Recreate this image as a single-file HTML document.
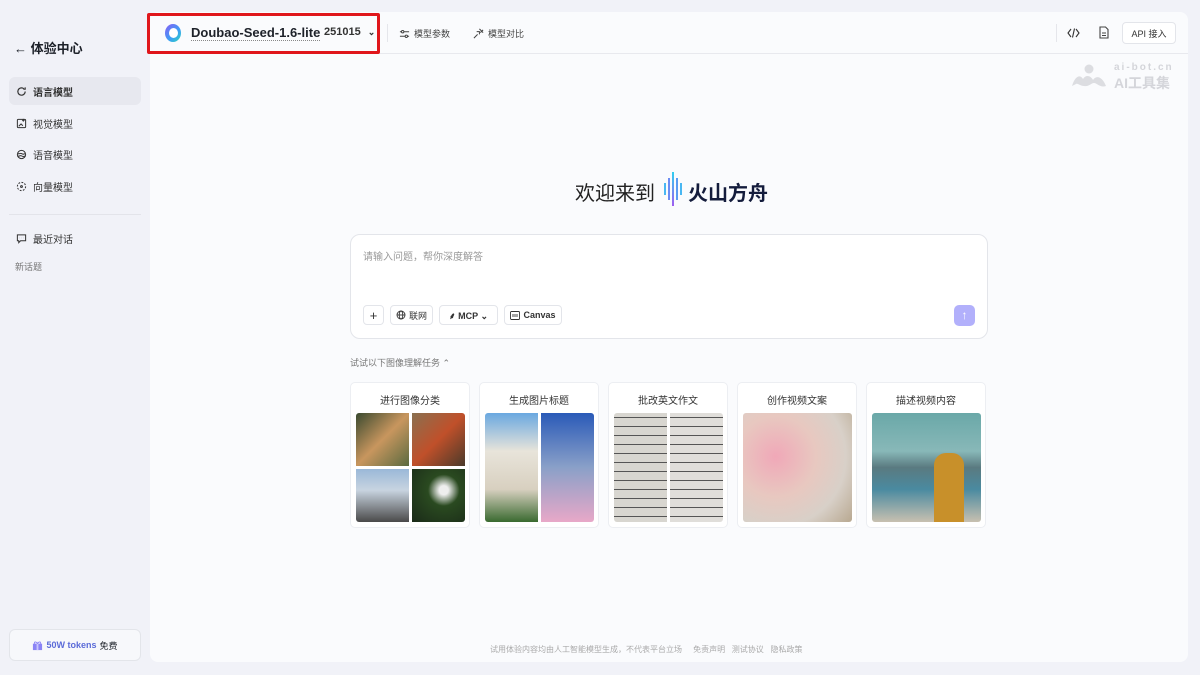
<!DOCTYPE html>
<html><head><meta charset="utf-8"><style>
*{box-sizing:border-box;margin:0;padding:0}
body{width:1200px;height:675px;background:#f1f2f8;font-family:"Liberation Sans","Noto Sans CJK SC",sans-serif;position:relative;overflow:hidden;color:#1d2129}
.a{position:absolute}
.nav{position:absolute;left:9px;width:132px;height:28px;display:flex;align-items:center;padding-left:7px;gap:6px;font-size:10px;border-radius:6px;color:#333}
.nav svg{width:11px;height:11px}
.main{left:150px;top:12px;width:1038px;height:650px;background:#fafbfd;border-radius:8px}
.btn{position:absolute;height:20px;border:1px solid #e3e5ea;border-radius:4px;background:#fff;font-size:9px;display:flex;align-items:center;justify-content:center;gap:3px;color:#333}
.card{position:absolute;top:382px;width:120px;height:146px;background:#fff;border:1px solid #eceef2;border-radius:5px}
.card .t{text-align:center;font-size:10px;color:#333;margin-top:9px}
.img{position:absolute;top:30px;left:5px;width:109px;height:109px;border-radius:3px;overflow:hidden}
</style></head><body>
<div class="a" style="left:14px;top:38px;font-size:13px;font-weight:bold">← 体验中心</div>
<div class="nav" style="top:77px;background:#e7e8ef;font-weight:bold"><svg viewBox="0 0 12 12" fill="none" stroke="#333" stroke-width="1.3"><path d="M10 6a4 4 0 1 1-1.5-3.1M10 1.5v2h-2"/></svg>语言模型</div>
<div class="nav" style="top:109px"><svg viewBox="0 0 12 12" fill="none" stroke="#333" stroke-width="1.1"><rect x="1.5" y="1.5" width="9" height="9" rx="1"/><path d="M3 9l2.5-2.5 2 2M8 1v3M6.5 2.5h3"/></svg>视觉模型</div>
<div class="nav" style="top:140px"><svg viewBox="0 0 12 12" fill="none" stroke="#333" stroke-width="1.1"><circle cx="6" cy="6" r="4.5"/><path d="M2 5c1.5 1 2.5-1 4 0s2.5 1 4 0M2 7.5c1.5 1 2.5-1 4 0s2.5 1 4 0"/></svg>语音模型</div>
<div class="nav" style="top:172px"><svg viewBox="0 0 12 12" fill="none" stroke="#333" stroke-width="1.1"><circle cx="6" cy="6" r="4.5" stroke-dasharray="2 1.5"/><circle cx="6" cy="6" r="1"/></svg>向量模型</div>
<div class="a" style="left:9px;top:214px;width:132px;height:1px;background:#e3e4ea"></div>
<div class="nav" style="top:224px"><svg viewBox="0 0 12 12" fill="none" stroke="#333" stroke-width="1.1"><path d="M1.5 2h9v6.5H5L3 10.5V8.5H1.5z"/><path d="M4 5.3h.1M6 5.3h.1M8 5.3h.1" stroke-width="1.4"/></svg>最近对话</div>
<div class="a" style="left:15px;top:260px;font-size:9px;color:#777">新话题</div>
<div class="a" style="left:9px;top:629px;width:132px;height:32px;background:#f7f8fb;border:1px solid #e3e5ea;border-radius:6px;font-size:9px;display:flex;align-items:center;justify-content:center;gap:3px"><svg width="11" height="11" viewBox="0 0 12 12"><rect x="1" y="4" width="10" height="7" fill="#8b84f6"/><rect x="5" y="2" width="2" height="9" fill="#c9c6fb"/><path d="M6 4C4 1 2 2 3 4M6 4c2-3 4-2 3 0" stroke="#8b84f6" fill="none"/></svg><b style="color:#5b6bd8">50W tokens</b>免费</div>

<div class="a main"></div>
<div class="a" style="left:150px;top:53px;width:1038px;height:1px;background:#e8e9ee"></div>
<div class="a" style="left:147px;top:13px;width:233px;height:41px;border:3px solid #e0161b;border-radius:2px"></div>
<div class="a" style="left:165px;top:24px;width:16px;height:18px;border-radius:50%;background:linear-gradient(135deg,#8a5cf5,#3aa0f5 60%,#2fd6b8)"></div>
<div class="a" style="left:169px;top:28px;width:9px;height:10px;border-radius:50%;background:#fff"></div>
<div class="a" style="left:191px;top:25px;font-size:13px;font-weight:bold;border-bottom:1px dotted #888">Doubao-Seed-1.6-lite</div>
<div class="a" style="left:324px;top:26px;font-size:11px;font-weight:bold;color:#333">251015 <span style="font-size:9px;margin-left:4px">⌄</span></div>
<div class="a" style="left:387px;top:24px;width:1px;height:18px;background:#e5e6eb"></div>
<div class="a" style="left:399px;top:27px;font-size:9px;color:#444;display:flex;gap:4px;align-items:center"><svg width="11" height="10" viewBox="0 0 12 10" fill="none" stroke="#444" stroke-width="1.1"><path d="M1 2.5h10M1 7.5h10"/><circle cx="4" cy="2.5" r="1.3" fill="#fff"/><circle cx="8" cy="7.5" r="1.3" fill="#fff"/></svg>模型参数</div>
<div class="a" style="left:473px;top:27px;font-size:9px;color:#444;display:flex;gap:4px;align-items:center"><svg width="11" height="11" viewBox="0 0 12 12" fill="none" stroke="#444" stroke-width="1.1"><path d="M1 11l4-4M4 4h3v3M7 1l4 4M8 5l3-3"/></svg>模型对比</div>
<div class="a" style="left:1056px;top:24px;width:1px;height:18px;background:#e5e6eb"></div>
<svg class="a" style="left:1067px;top:27px" width="13" height="12" viewBox="0 0 13 12" fill="none" stroke="#333" stroke-width="1.1"><path d="M4 2L1 6l3 4M9 2l3 4-3 4M7.5 1.5l-2 9"/></svg>
<svg class="a" style="left:1099px;top:26px" width="10" height="13" viewBox="0 0 10 13" fill="none" stroke="#444" stroke-width="1.1"><path d="M1 1h5.5L9 3.5V12H1z"/><path d="M3 7h4M3 9.5h4"/></svg>
<div class="btn" style="left:1122px;top:22px;width:54px;height:22px">API 接入</div>
<svg class="a" style="left:1071px;top:64px" width="36" height="24" viewBox="0 0 36 24"><circle cx="18" cy="5" r="4.5" fill="#dcdde1"/><path d="M1 22c3-10 8-12 11-7 3-5 8-3 10 1 3-5 9-4 13 6-6 2-9-3-12-3-3 0-5 4-10 3-4 0-6-3-8-2z" fill="#dcdde1"/></svg>
<div class="a" style="left:1114px;top:62px;color:#d4d5da;font-size:10px;font-weight:bold;letter-spacing:2px">ai-bot.cn</div>
<div class="a" style="left:1114px;top:73px;color:#d4d5da;font-size:14px;font-weight:bold">AI工具集</div>

<div class="a" style="left:575px;top:177px;font-size:20px;color:#222">欢迎来到</div>
<div class="a" style="left:664px;top:172px;width:20px;height:34px;display:flex;align-items:center;gap:2px">
<i style="width:2px;height:12px;background:#49b7f2"></i><i style="width:2px;height:22px;background:#6b8cf3"></i><i style="width:2px;height:34px;background:linear-gradient(#2fd0f0,#a05cf0)"></i><i style="width:2px;height:22px;background:#5a9bf3"></i><i style="width:2px;height:12px;background:#49b7f2"></i></div>
<div class="a" style="left:688px;top:177px;font-size:20px;font-weight:bold;color:#141c3c">火山方舟</div>

<div class="a" style="left:350px;top:234px;width:638px;height:105px;background:#fff;border:1px solid #e3e5ea;border-radius:10px"></div>
<div class="a" style="left:363px;top:248px;font-size:10px;color:#999">请输入问题，帮你深度解答</div>
<div class="btn" style="left:363px;top:305px;width:21px;font-size:13px">+</div>
<div class="btn" style="left:390px;top:305px;width:43px"><svg width="10" height="10" viewBox="0 0 10 10" fill="none" stroke="#333" stroke-width=".9"><circle cx="5" cy="5" r="4"/><ellipse cx="5" cy="5" rx="1.8" ry="4"/><path d="M1 5h8"/></svg>联网</div>
<div class="btn" style="left:439px;top:305px;width:59px"><b>⸙ MCP ⌄</b></div>
<div class="btn" style="left:504px;top:305px;width:58px"><svg width="10" height="9" viewBox="0 0 10 9" fill="none" stroke="#333" stroke-width=".9"><rect x=".5" y=".5" width="9" height="8" rx="1"/><path d="M3 3v3M5 3v3M7 3v3"/></svg><b>Canvas</b></div>
<div class="a" style="left:954px;top:305px;width:21px;height:21px;border-radius:5px;background:#b2b0fb;color:#fff;font-size:12px;text-align:center;line-height:21px">↑</div>

<div class="a" style="left:350px;top:356px;font-size:9px;color:#777">试试以下图像理解任务 ⌃</div>

<div class="card" style="left:350px"><div class="t">进行图像分类</div><div class="img" style="background:#fff">
<div class="a" style="left:0;top:0;width:53px;height:53px;background:linear-gradient(135deg,#3a4a30,#c8965e 50%,#5a6a40)"></div>
<div class="a" style="left:56px;top:0;width:53px;height:53px;background:linear-gradient(135deg,#8a7050,#c0502a 50%,#4a3a2a)"></div>
<div class="a" style="left:0;top:56px;width:53px;height:53px;background:linear-gradient(180deg,#9ab8d8,#c8d4e0 40%,#4a4a4a)"></div>
<div class="a" style="left:56px;top:56px;width:53px;height:53px;background:radial-gradient(circle at 60% 40%,#eee 10%,#2a4a20 35%,#1a2a18)"></div></div></div>
<div class="card" style="left:479px"><div class="t">生成图片标题</div><div class="img" style="background:#fff">
<div class="a" style="left:0;top:0;width:53px;height:109px;background:linear-gradient(180deg,#6aa8e0,#e8e4da 35%,#d8d0c0 70%,#3a6a30)"></div>
<div class="a" style="left:56px;top:0;width:53px;height:109px;background:linear-gradient(180deg,#2a5ab8,#8aa0c8 50%,#e8a8c8)"></div></div></div>
<div class="card" style="left:608px"><div class="t">批改英文作文</div><div class="img" style="background:#fff">
<div class="a" style="left:0;top:0;width:53px;height:109px;background:repeating-linear-gradient(180deg,#d8d6d0 0 4px,#555 4px 5px,#d8d6d0 5px 9px)"></div>
<div class="a" style="left:56px;top:0;width:53px;height:109px;background:repeating-linear-gradient(180deg,#e0deda 0 4px,#555 4px 5px,#e0deda 5px 9px)"></div></div></div>
<div class="card" style="left:737px"><div class="t">创作视频文案</div><div class="img" style="background:radial-gradient(circle at 30% 40%,#f0a8b8,#e8c8c0 40%,#d8d0c8 70%,#b8a890)"></div></div>
<div class="card" style="left:866px"><div class="t">描述视频内容</div><div class="img" style="background:linear-gradient(180deg,#6aa8a8,#88b8b8 35%,#5a7a80 50%,#4a8aa0 70%,#c8c0b0)"><div class="a" style="left:62px;top:40px;width:30px;height:69px;background:#c8902a;border-radius:12px 12px 0 0"></div></div></div>

<div class="a" style="left:490px;top:644px;font-size:8px;color:#aaa">试用体验内容均由人工智能模型生成，不代表平台立场 &nbsp;&nbsp;&nbsp; 免责声明 &nbsp; 测试协议 &nbsp; 隐私政策</div>
</body></html>
